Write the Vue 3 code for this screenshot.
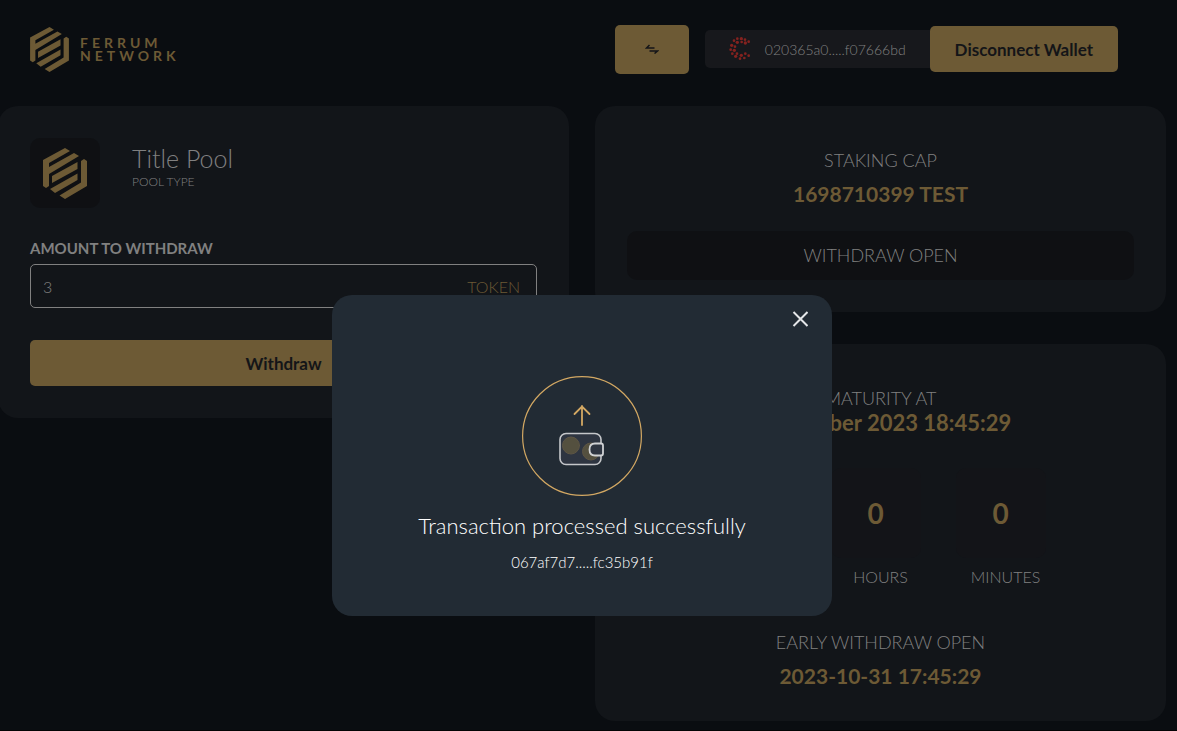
<script setup>
import { ref } from 'vue'

const amount = ref('3')
const open = ref(true)
const countdown = [
  { label: 'DAYS', value: 0 },
  { label: 'HOURS', value: 0 },
  { label: 'MINUTES', value: 0 },
]
const dots = [
  [41, 17, 4], [53, 17, 5], [64, 20, 4], [75, 26, 4], [31, 23, 4], [41, 28, 5], [54, 27, 4], [65, 30, 5],
  [24, 37, 5], [34, 41, 4], [21, 50, 4], [32, 52, 5], [26, 62, 4], [40, 62, 4], [36, 70, 5], [53, 67, 5],
  [65, 62, 4], [75, 68, 4], [49, 77, 4], [62, 75, 4],
]
</script>

<template>
  <div class="page">
    <header class="header">
      <a class="brand" href="#" aria-label="Ferrum Network">
        <svg class="brand-mark" viewBox="0 0 44 51" aria-hidden="true">
          <path d="M0 12 22 0l5 3L6 15v4L31 5l5 3L6 26v12l-3 2-3-2z" />
          <path d="M9 28 34.500 14v7L9 35zM7 41l27.500-15.500V32L12 45z" />
          <path d="M38 13l3-2 3 2v25L22 51l-5.500-3.500L38 34.500z" />
        </svg>
        <span class="brand-text">FERRUM<br>NETWORK</span>
      </a>
      <div class="actions">
        <button class="gold swap" type="button" aria-label="Switch network">
          <svg viewBox="0 0 14 10" aria-hidden="true"><path d="M4.500 1 1.500 4H9.500M9.500 9.500 12.500 7H4.500" /></svg>
        </button>
        <div class="account">
          <svg viewBox="16 12 66 72" aria-hidden="true">
            <circle v-for="(d, i) in dots" :key="i" :cx="d[0]" :cy="d[1]" :r="d[2]" />
          </svg>
          <span>020365a0.....f07666bd</span>
        </div>
        <button class="gold disconnect" type="button">Disconnect Wallet</button>
      </div>
    </header>

    <main class="grid">
      <section class="card stake">
        <div class="pool">
          <div class="pool-icon">
            <svg viewBox="0 0 44 51" aria-hidden="true">
              <path d="M0 12 22 0l5 3L6 15v4L31 5l5 3L6 26v12l-3 2-3-2z" />
              <path d="M9 28 34.500 14v7L9 35zM7 41l27.500-15.500V32L12 45z" />
              <path d="M38 13l3-2 3 2v25L22 51l-5.500-3.500L38 34.500z" />
            </svg>
          </div>
          <div>
            <h1>Title Pool</h1>
            <p>POOL TYPE</p>
          </div>
        </div>
        <label for="amount">AMOUNT TO WITHDRAW</label>
        <div class="field">
          <input id="amount" v-model="amount" type="text">
          <span>TOKEN</span>
        </div>
        <button class="gold withdraw" type="button">Withdraw</button>
      </section>

      <div class="side">
        <section class="card">
          <p class="caption">STAKING CAP</p>
          <p class="figure spaced">1698710399 TEST</p>
          <p class="status">WITHDRAW OPEN</p>
        </section>
        <section class="card">
          <p class="caption">MATURITY AT</p>
          <p class="figure">31 October 2023 18:45:29</p>
          <div class="countdown">
            <div v-for="c in countdown" :key="c.label" class="unit">
              <strong>{{ c.value }}</strong>
              <span>{{ c.label }}</span>
            </div>
          </div>
          <p class="caption">EARLY WITHDRAW OPEN</p>
          <p class="figure spaced">2023-10-31 17:45:29</p>
        </section>
      </div>
    </main>

    <div v-if="open" class="layer">
      <div class="modal" role="dialog" aria-modal="true" aria-labelledby="result">
        <button class="close" type="button" aria-label="Close" @click="open = false">
          <svg viewBox="0 0 16 16" aria-hidden="true"><path d="M1.500 1l14 14M15.500 1l-14 14" /></svg>
        </button>
        <svg class="wallet" viewBox="0 0 120 120" aria-hidden="true">
          <circle class="line" cx="60" cy="60" r="59.400" />
          <path class="arrow" d="M60 49V30M52.500 38 60 30.500 67.500 38" />
          <rect class="body" x="38" y="57.500" width="41" height="31" rx="6" />
          <circle class="coin" cx="49" cy="69.500" r="8.500" />
          <circle class="coin" cx="69" cy="75.500" r="8.500" />
          <path class="clasp" d="M79 67.500h-6q-5.500 0-5.500 6t5.500 6h6q2 0 2-2v-8q0-2-2-2z" />
        </svg>
        <h2 id="result">Transaction processed successfully</h2>
        <p>067af7d7.....fc35b91f</p>
      </div>
    </div>
  </div>
</template>

<style>
html {
  background: #030304;
}
</style>

<style scoped>
.page {
  overflow: hidden;
  padding-bottom: 9px;
  background: #0a0d11;
  color: #808080;
  font-family: Lato, "Open Sans", sans-serif;
  font-weight: 300;
}
h1, h2, p {
  margin: 0;
  font-weight: 300;
}
button {
  font-family: inherit;
  cursor: pointer;
}
.gold {
  border: 0;
  border-radius: 5px;
  background: #6d5a35;
  color: #141518;
  font-size: 17px;
  font-weight: 700;
}
.header {
  display: flex;
  align-items: center;
  justify-content: space-between;
  height: 98px;
  padding: 0 59px 0 30px;
}
.brand {
  display: flex;
  align-items: center;
  gap: 11px;
  color: #6d5a35;
  text-decoration: none;
}
.brand-mark {
  width: 39px;
  height: 45px;
  fill: currentColor;
}
.brand-text {
  font-size: 14px;
  font-weight: 700;
  line-height: 13px;
  letter-spacing: 4px;
}
.actions {
  display: flex;
  align-items: center;
}
.swap {
  display: flex;
  align-items: center;
  justify-content: center;
  width: 74px;
  height: 49px;
  margin-right: 16px;
  padding: 0;
}
.swap svg {
  width: 14px;
  height: 10px;
  fill: none;
  stroke: #141518;
  stroke-width: 1.5;
}
.account {
  display: flex;
  align-items: center;
  gap: 14px;
  height: 38px;
  padding: 0 24px;
  border-radius: 5px 0 0 5px;
  background: #17181c;
  font-size: 14px;
}
.account svg {
  width: 22px;
  height: 24px;
  fill: #84221f;
}
.disconnect {
  height: 46px;
  padding: 0 25px;
}
.grid {
  display: grid;
  grid-template-columns: 1fr 1fr;
  gap: 26px;
  align-items: start;
  margin: 8px 11px 0 -2px;
}
.card {
  padding: 32px;
  border-radius: 20px;
  background: #121519;
}
.side {
  display: grid;
  gap: 32px;
  text-align: center;
}
.side .card {
  padding-top: 42px;
}
.pool {
  display: flex;
  gap: 32px;
  margin-bottom: 30px;
}
.pool-icon {
  display: flex;
  align-items: center;
  justify-content: center;
  width: 70px;
  height: 70px;
  border-radius: 10px;
  background: #0f1013;
}
.pool-icon svg {
  width: 44px;
  height: 51px;
  fill: #6d5a35;
}
.pool h1 {
  margin-top: 5px;
  font-size: 25px;
  line-height: 30px;
}
.pool p {
  font-size: 12px;
  line-height: 18px;
}
label {
  display: block;
  margin-bottom: 6px;
  font-size: 15px;
  font-weight: 700;
  line-height: 20px;
}
.field {
  display: flex;
  align-items: center;
  box-sizing: border-box;
  height: 44px;
  padding: 0 16px 0 12px;
  border: 1px solid #808080;
  border-radius: 5px;
  font-size: 16px;
}
.field input {
  flex: 1;
  min-width: 0;
  padding: 0;
  border: 0;
  outline: 0;
  background: none;
  color: inherit;
  font: inherit;
}
.field span {
  color: #6d5a35;
}
.withdraw {
  width: 100%;
  height: 46px;
  margin-top: 32px;
}
.caption {
  font-size: 18px;
  line-height: 24px;
}
.figure {
  color: #6d5a35;
  font-size: 22px;
  font-weight: 700;
  line-height: 26px;
}
.spaced {
  margin-top: 9px;
  font-size: 21px;
}
.status {
  margin-top: 24px;
  border-radius: 10px;
  background: #0f1013;
  font-size: 18px;
  line-height: 49px;
}
.countdown {
  display: flex;
  justify-content: center;
  gap: 25px;
  margin: 32px 0 43px;
}
.unit {
  width: 100px;
}
.unit strong {
  display: block;
  width: 90px;
  border-radius: 10px;
  background: #131418;
  color: #6d5a35;
  font-size: 28px;
  font-weight: 700;
  line-height: 90px;
}
.unit span {
  display: block;
  margin-top: 9px;
  font-size: 16px;
  line-height: 20px;
}
.layer {
  position: fixed;
  inset: 0;
  padding: 295px 13px 0 0;
}
.modal {
  display: flex;
  flex-direction: column;
  align-items: center;
  box-sizing: border-box;
  max-width: 500px;
  margin: 0 auto;
  padding: 12px 20px 42px;
  border-radius: 20px;
  background: #222b34;
  color: #fff;
}
.close {
  display: flex;
  align-self: flex-end;
  padding: 4px;
  border: 0;
  background: none;
}
.close svg {
  width: 16px;
  height: 16px;
  fill: none;
  stroke: #e4e6e8;
  stroke-width: 2;
}
.wallet {
  width: 120px;
  height: 120px;
  margin: 45px 0 16px;
  fill: none;
  stroke-linecap: round;
}
.line {
  stroke: #d3a863;
  stroke-width: 1.2;
}
.arrow {
  stroke: #d3a863;
  stroke-width: 1.8;
}
.body {
  fill: #2e3541;
  stroke: #c5c7ca;
  stroke-width: 1.6;
}
.coin {
  fill: #54503f;
  stroke: #5d5545;
}
.clasp {
  fill: #2e3541;
  stroke: #d0d2d4;
  stroke-width: 1.8;
}
.modal h2 {
  font-size: 22px;
  line-height: 28px;
}
.modal p {
  margin-top: 10px;
  font-size: 15px;
  line-height: 24px;
}
</style>
